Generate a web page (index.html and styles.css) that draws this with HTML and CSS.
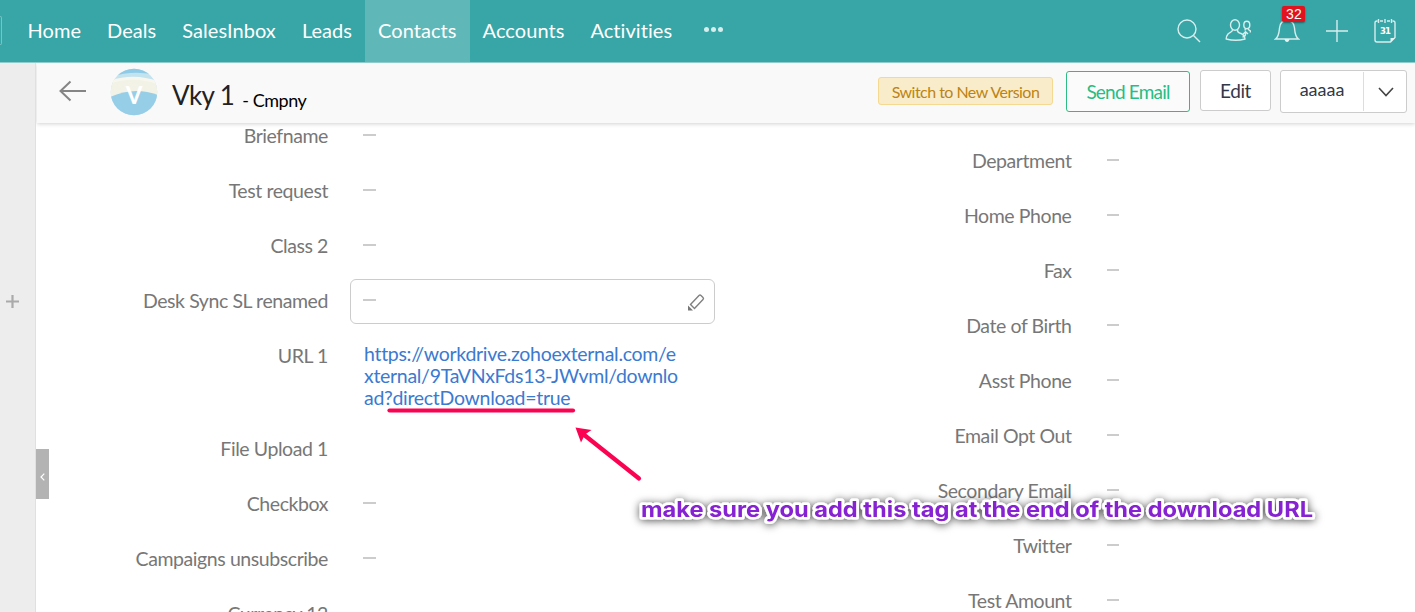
FILE: index.html
```html
<!DOCTYPE html>
<html lang="en">
<head>
<meta charset="utf-8">
<title>Contacts</title>
<link rel="stylesheet" href="styles.css">
</head>
<body>
<div class="app">
  <nav class="topbar">
    <span class="logo-edge"></span>
    <div class="tabs">
      <a class="tab">Home</a><a class="tab">Deals</a><a class="tab">SalesInbox</a><a class="tab">Leads</a><a class="tab active">Contacts</a><a class="tab">Accounts</a><a class="tab">Activities</a>
      <span class="more"><i></i><i></i><i></i></span>
    </div>
    <div class="tools">
      <svg width="26" height="26" viewBox="0 0 26 26"><circle cx="11" cy="11" r="9"/><path d="M17.500 17.500L24 24"/></svg>
      <svg width="26" height="26" viewBox="0 0 26 26"><ellipse cx="10" cy="7" rx="4.500" ry="5.300"/><path d="M7.500 11.500C8 14 5 14 3 16Q1 18.500 1.200 21Q11 23.500 20 21Q19.500 17 16 15.500Q12 14.500 12.500 11.500"/><ellipse cx="21.800" cy="7" rx="3" ry="3.700"/><path d="M20.200 10.500V12.500M23.500 10.500Q23 12 25.300 12.800V14.500M17.500 19Q21 18.500 20.500 14.500M18 16.200L20.500 13.800L23 16"/></svg>
      <span class="bell"><svg width="26" height="26" viewBox="0 0 26 26"><path d="M1.500 21C5 18.500 5 15 5.500 10C6 4.500 9 2.500 13 2.500S20 4.500 20.500 10C21 15 21 18.500 24.500 21Z"/><path class="solid" d="M10.500 21H15.500Q15 24 13 24T10.500 21Z"/></svg><b class="badge">32</b></span>
      <svg width="26" height="26" viewBox="0 0 26 26"><path d="M13 2V24M2 13H24"/></svg>
      <svg class="cal" width="26" height="26" viewBox="0 0 26 26"><path d="M5.500 3H5Q3 3 3 5V22Q3 24 5 24H18.500L23 19.500V5Q23 3 21 3H20.500M8 3H11M15 3H18M6.500 1V5M13 1V5M19.500 1V5"/><path class="solid" d="M18.500 24V20H23Z"/><text x="8" y="16">31</text></svg>
    </div>
  </nav>
  <div class="body">
    <aside class="rail">
      <svg class="rail-plus" width="13" height="13" viewBox="0 0 13 13"><path d="M6.500 0V13M0 6.500H13"/></svg>
    </aside>
    <main class="main">
      <header class="record-head">
        <svg class="back" width="28" height="22" viewBox="0 0 28 22"><path d="M11.500 1.500L1.500 11L11.500 20.500M1.500 11H27"/></svg>
        <div class="avatar">
          <svg width="48" height="48" viewBox="0 0 48 48"><defs><clipPath id="disc"><circle cx="24" cy="24" r="23.300"/></clipPath></defs><g clip-path="url(#disc)"><rect width="48" height="48" fill="#c3e3ef"/><path d="M0 0H48V8Q26 1 0 9Z" fill="#8fcbe6"/><path d="M0 14Q25 6 48 14V32H0Z" fill="#f3f2e6"/><path d="M0 14Q25 6 48 15" fill="none" stroke="#f8f7ef" stroke-width="3"/><path d="M0 29Q24 18 48 27V48H0Z" fill="#96cee8"/></g></svg>
          <span>V</span>
        </div>
        <h1>Vky 1</h1><span class="company">- Cmpny</span>
        <div class="actions">
          <button class="switch">Switch to New Version</button>
          <button class="send">Send Email</button>
          <button class="edit">Edit</button>
          <div class="split"><span>aaaaa</span><i></i><svg width="16" height="10" viewBox="0 0 16 10"><path d="M1 1L8 8.500L15 1"/></svg></div>
        </div>
      </header>
      <section class="details">
        <dl class="col left">
          <div class="row"><dt>Briefname</dt><dd><i class="dash"></i></dd></div>
          <div class="row"><dt>Test request</dt><dd><i class="dash"></i></dd></div>
          <div class="row"><dt>Class 2</dt><dd><i class="dash"></i></dd></div>
          <div class="row"><dt>Desk Sync SL renamed</dt><dd class="field"><i class="dash"></i><svg width="18" height="19" viewBox="0 0 18 19"><path d="M3.500 11.500L12 2.500Q13 1.500 14 2.500L16 4.500Q17 5.500 16 6.500L7.500 15.500Z"/><path d="M1 17.500V12.500L6 17.500Z" class="tip"/></svg></dd></div>
          <div class="row tall"><dt>URL 1</dt><dd class="url"><a>https://workdrive.zohoexternal.com/e<br>xternal/9TaVNxFds13-JWvml/downlo<br>ad?directDownload=true</a></dd></div>
          <div class="row"><dt>File Upload 1</dt><dd></dd></div>
          <div class="row"><dt>Checkbox</dt><dd><i class="dash"></i></dd></div>
          <div class="row"><dt>Campaigns unsubscribe</dt><dd><i class="dash"></i></dd></div>
          <div class="row"><dt>Currency 12</dt><dd></dd></div>
        </dl>
        <dl class="col right">
          <div class="row"><dt>Department</dt><dd><i class="dash"></i></dd></div>
          <div class="row"><dt>Home Phone</dt><dd><i class="dash"></i></dd></div>
          <div class="row"><dt>Fax</dt><dd><i class="dash"></i></dd></div>
          <div class="row"><dt>Date of Birth</dt><dd><i class="dash"></i></dd></div>
          <div class="row"><dt>Asst Phone</dt><dd><i class="dash"></i></dd></div>
          <div class="row"><dt>Email Opt Out</dt><dd><i class="dash"></i></dd></div>
          <div class="row"><dt>Secondary Email</dt><dd><i class="dash"></i></dd></div>
          <div class="row"><dt>Twitter</dt><dd><i class="dash"></i></dd></div>
          <div class="row"><dt>Test Amount</dt><dd><i class="dash"></i></dd></div>
        </dl>
      </section>
      <div class="collapse"><svg width="5" height="8" viewBox="0 0 5 8"><path d="M4.300 .7L1 4L4.300 7.300"/></svg></div>
    </main>
  </div>
  <svg class="marks" width="1415" height="612" viewBox="0 0 1415 612">
    <defs><filter id="halo" x="-5%" y="-80%" width="110%" height="280%"><feDropShadow dx="0" dy="1" stdDeviation="4" flood-color="#000" flood-opacity=".7"/></filter></defs>
    <path class="stroke" d="M389.500 410.500H573"/>
    <path class="stroke" d="M583 434L639 478.500"/>
    <path class="head" d="M575.500 427.500L591.500 430L585 434.500L581 442.500Z"/>
    <text class="note" filter="url(#halo)" x="641" y="517" textLength="672" lengthAdjust="spacingAndGlyphs">make sure you add this tag at the end of the download URL</text>
  </svg>
</div>
</body>
</html>
```
FILE: styles.css
```css
* { box-sizing: border-box; }
body { margin: 0; font-family: Lato, sans-serif; background: #fff; }
.app { position: relative; width: 1415px; height: 612px; overflow: hidden; display: flex; flex-direction: column; }
.topbar { height: 63px; flex: none; display: flex; background: #38a5a7; border-bottom: 1px solid #8fcccd; color: #fff; }
.logo-edge { width: 2px; height: 29px; margin: 16px 12.500px 0 0; border: 1px solid #79c3c4; border-left: 0; border-radius: 0 3px 3px 0; }
.tabs { display: flex; }
.tab { padding: 0 13px; font-size: 20px; line-height: 60px; letter-spacing: .06px; }
.tab.active { background: #60b7b8; }
.more { display: flex; gap: 2px; align-items: center; padding: 0 0 4px 19px; }
.more i { width: 5px; height: 5px; border-radius: 50%; background: #d5eeee; }
.tools { display: flex; gap: 23.300px; margin: 18px 16px 0 auto; }
.tools svg { display: block; fill: none; stroke: #d8eeee; stroke-width: 1.400; }
.tools .cal { margin-left: -1.500px; margin-right: 1.500px; }
.tools .solid { fill: #e4f4f4; stroke: none; }
.tools text { fill: #fff; stroke: none; font: bold 8.500px "DejaVu Sans", sans-serif; letter-spacing: -.8px; }
.bell { position: relative; height: 26px; }
.badge { position: absolute; left: 8px; top: -12px; width: 23px; height: 16px; border-radius: 2px; background: #e0131f; box-shadow: 0 1px 2px #0006; font: 14px/17px "Liberation Sans", sans-serif; text-align: center; }
.body { flex: 1; display: flex; min-height: 0; }
.rail { width: 36px; background: #ededed; border-right: 1px solid #e0e0e0; padding: 232px 0 0 6px; }
.rail-plus { display: block; stroke: #aaa; stroke-width: 2.200; }
.main { flex: 1; position: relative; display: flex; flex-direction: column; overflow: hidden; }
.record-head { position: relative; z-index: 1; height: 60px; flex: none; margin-left: 1px; padding-left: 22px; display: flex; background: #f9f9f9; box-shadow: 0 1px 4px #0000002e; }
.back { margin-top: 17px; fill: none; stroke: #858585; stroke-width: 2; }
.avatar { position: relative; width: 48px; height: 48px; margin: 5px 0 0 23px; }
.avatar svg { display: block; }
.avatar span { position: absolute; inset: 0; text-align: center; font-size: 24px; line-height: 53px; color: #fff; font-weight: 700; }
h1 { margin: 0 0 0 14px; font-size: 26px; font-weight: 400; line-height: 65px; letter-spacing: -.6px; color: #222; white-space: nowrap; }
.company { margin-left: 8px; font-size: 18px; line-height: 75px; letter-spacing: -.45px; color: #000; white-space: nowrap; }
.actions { margin-left: auto; display: flex; align-items: flex-start; padding-right: 8px; color: #313949; }
button { font-family: inherit; padding: 0; border-radius: 3px; color: inherit; white-space: nowrap; }
.switch { width: 175px; height: 28px; margin: 14px 13px 0 0; border: 1px solid #f5d991; background: #f8eccb; color: #bd8314; font-size: 16px; letter-spacing: -.53px; }
.send { width: 124px; height: 41px; margin: 8px 10px 0 0; padding-bottom: 1px; border: 1px solid #2dbd84; background: #fbfbfb; color: #27bd83; font-size: 19px; letter-spacing: -.8px; }
.edit { width: 71px; height: 41px; margin: 7px 9px 0 0; padding-bottom: 1px; border: 1px solid #ccc; background: #fff; font-size: 19px; letter-spacing: -.4px; }
.split { width: 127px; height: 43px; margin-top: 7px; display: flex; align-items: center; border: 1px solid #ccc; border-radius: 3px; background: #fff; font-size: 18px; }
.split span { width: 82px; text-align: center; padding-bottom: 5px; }
.split i { width: 1px; height: 39px; background: #ddd; }
.split svg { margin-left: 14px; fill: none; stroke: #444; stroke-width: 1.600; }
.details { display: flex; margin-top: -14px; }
.col { margin: 0; }
.left { width: 744px; }
.right { padding-top: 25px; width: 500px; }
.row { height: 55px; display: flex; }
.row.tall { height: 93px; }
dt { width: 292px; flex: none; text-align: right; font-size: 19.500px; line-height: 54px; letter-spacing: -.42px; color: #777; white-space: nowrap; }
.right dt { width: 291.500px; }
dd { margin: 0 0 0 35px; }
.dash { display: block; width: 13px; height: 2px; margin-top: 25px; background: #ccc; }
.right .dash { width: 12px; }
.field { width: 365px; height: 45px; margin: 5px 0 0 22px; padding: 0 9px 0 12px; border: 1px solid #ccc; border-radius: 6px; display: flex; justify-content: space-between; }
.field .dash { margin-top: 19px; }
.field svg { margin-top: 13px; fill: none; stroke: #808080; stroke-width: 1.400; }
.field .tip { fill: #777; stroke: none; }
.url { padding: 14px 0 0 1px; font-size: 19.500px; line-height: 22px; letter-spacing: -.3px; color: #3a7ad1; white-space: nowrap; }
.collapse { position: absolute; left: 0; top: 386px; width: 13px; height: 50px; background: #b3b3b3; display: flex; align-items: center; justify-content: center; padding-top: 5px; }
.collapse svg { fill: none; stroke: #fff; stroke-width: 1.200; }
.marks { position: absolute; left: 0; top: 0; pointer-events: none; }
.stroke { fill: none; stroke: #fb0352; stroke-width: 4.200; stroke-linecap: round; }
.head { fill: #fb0352; }
.note { font: 700 21px Inter, sans-serif; fill: #8620d2; stroke: #fff; stroke-width: 5px; stroke-linejoin: round; paint-order: stroke; }
```
